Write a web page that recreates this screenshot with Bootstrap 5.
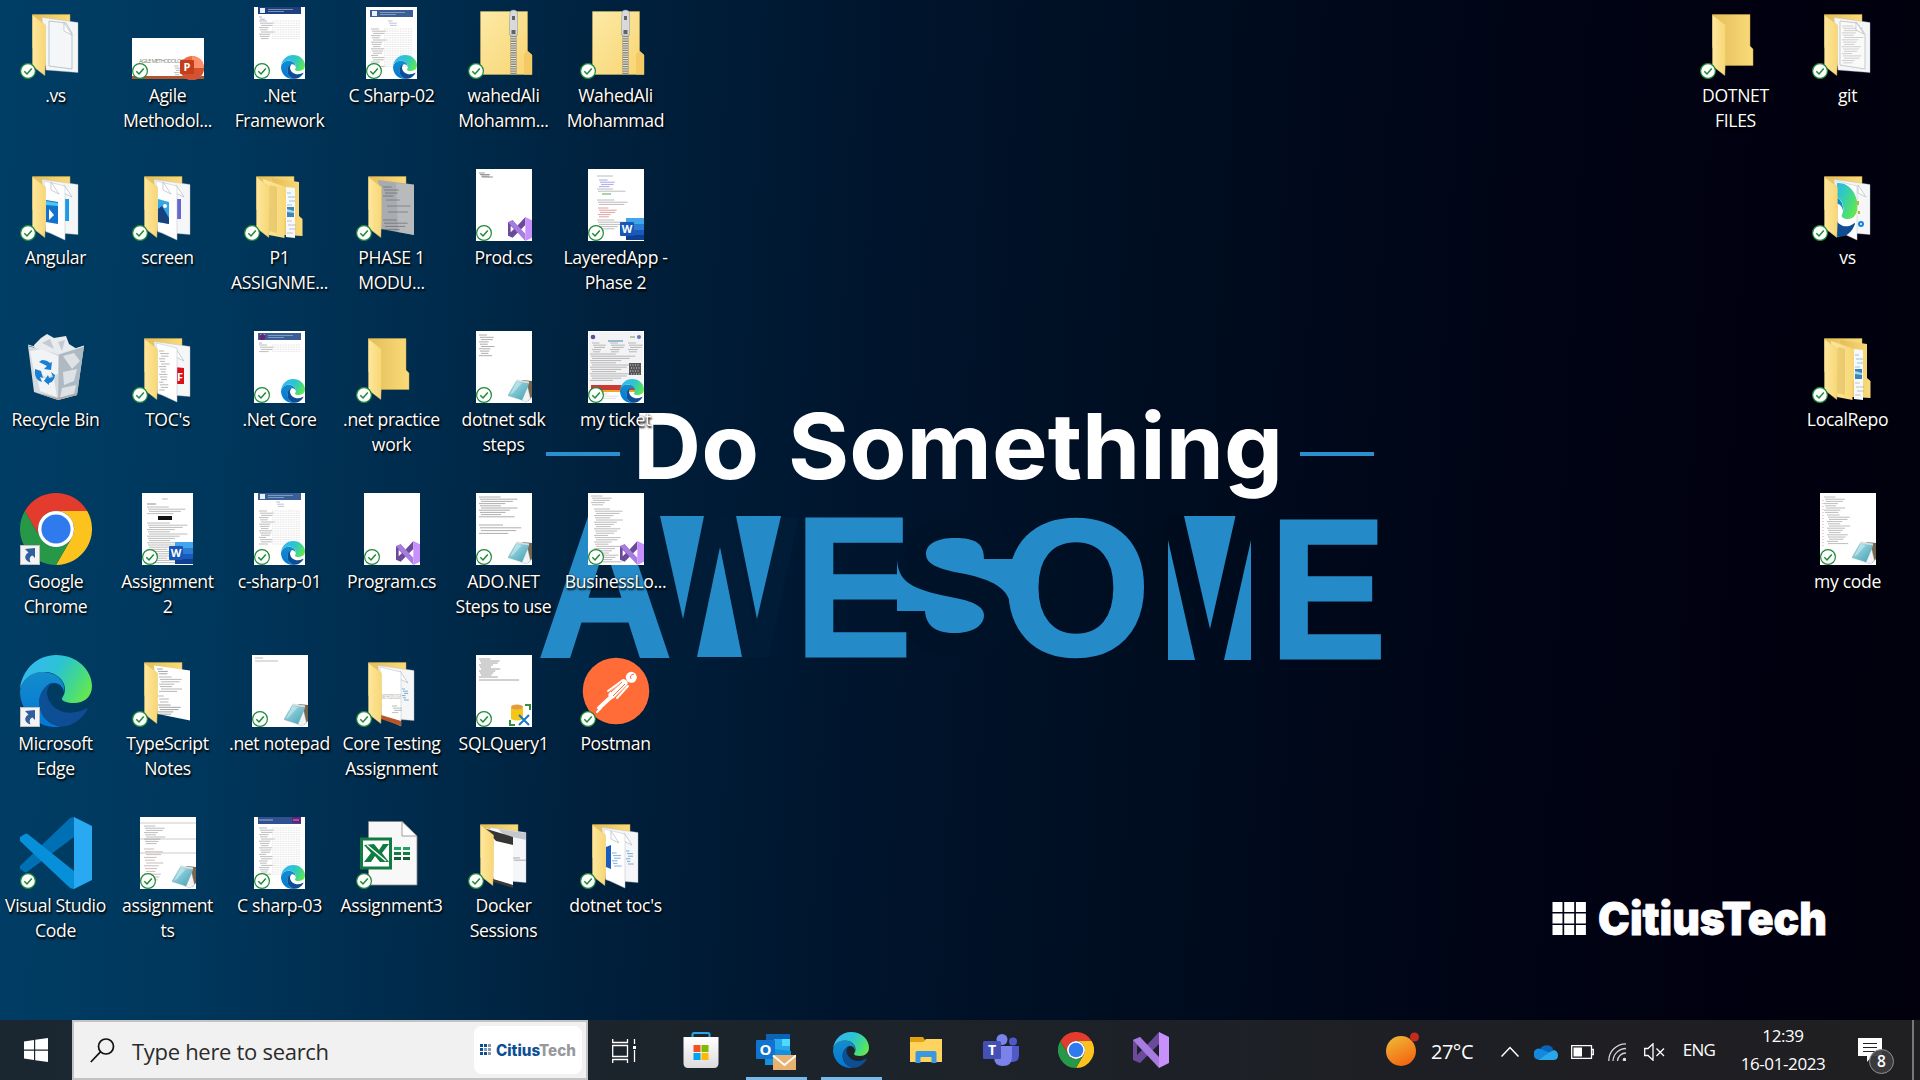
<!DOCTYPE html>
<html lang="en">
<head>
<meta charset="utf-8">
<meta name="viewport" content="width=device-width, initial-scale=1">
<title>Desktop</title>
<link href="https://cdn.jsdelivr.net/npm/bootstrap@5.3.0/dist/css/bootstrap.min.css" rel="stylesheet">
<style>
  body { width: 1920px; height: 1080px; overflow: hidden; font-family: "Open Sans", "Noto Sans", sans-serif; background: #000; }
  .desktop { height: 1020px; background: linear-gradient(93deg, #003e66 0%, #00375c 12%, #002c4d 22%, #001f3b 33%, #00152d 45%, #000e22 58%, #000718 72%, #010010 90%, #01000c 100%); }
  .wallpaper { left: 0; top: 0; width: 1920px; height: 1020px; }
  .icon-grid { display: grid; grid-template-rows: repeat(6, 162px); grid-auto-columns: 112px; grid-auto-flow: column; position: relative; }
  .shortcut { padding-top: 7px; width: 112px; color: #fff; }
  .shortcut > svg { width: 72px; height: 72px; overflow: visible; }
  .caption { font-size: 17.6px; line-height: 25px; letter-spacing: -.35px; white-space: pre; margin-top: 4px; margin-left: -1px; text-shadow: 1px 2px 2px #000, 0 0 2px rgba(0,0,0,.7); }
  .right-side { padding-right: 16px; }
  .taskbar { height: 60px; background: linear-gradient(90deg, #1a2731, #1c242b 40%, #1e1f24 75%, #201f22); color: #fff; }
  .start-btn { width: 72px; }
  .search-box { width: 516px; border: 2px solid #c3c3c3; background: #f1f1f1; color: #2b2b2b; padding: 4px 4px 4px 16px; }
  .search-box .hint { font-size: 22px; letter-spacing: -.3px; margin-left: 17px; padding-top: 3px; }
  .brand-chip { width: 108px; height: 48px; border-radius: 8px; background: #fff; }
  .task-view { width: 75px; padding-left: 24px; }
  .app-btn { width: 75px; height: 60px; position: relative; }
  .app-btn.running::after { content: ""; position: absolute; left: 8px; right: 6px; bottom: 0; height: 3px; background: #76b9ed; }
  .weather { width: 114px; font-size: 20px; letter-spacing: -.5px; padding-left: 6px; gap: 12px; }
  .lang { width: 55px; font-size: 17px; letter-spacing: -.7px; padding-right: 1px; }
  .clock { width: 112px; font-size: 17px; line-height: 28px; letter-spacing: -.4px; }
  .notify { width: 73px; padding-left: 18px; padding-top: 14px; }
  .peek { width: 8px; border-left: 2px solid #77787b; }
  .w32 { width: 32px; } .w36 { width: 36px; } .w38 { width: 38px; } .w40 { width: 40px; }
</style>
</head>
<body>
<svg width="0" height="0" class="position-absolute">
  <defs>
    <linearGradient id="edgeTop" x1="0" y1=".3" x2="1" y2=".7"><stop offset="0" stop-color="#35b8f5"/><stop offset=".45" stop-color="#2cc3d3"/><stop offset=".75" stop-color="#43d98a"/><stop offset="1" stop-color="#66e84c"/></linearGradient>
    <linearGradient id="edgeMid" x1="0" y1="0" x2="0" y2="1"><stop offset="0" stop-color="#158ccb"/><stop offset="1" stop-color="#0078d7"/></linearGradient>
    <linearGradient id="edgeLow" x1="0" y1="0" x2="1" y2="0"><stop offset="0" stop-color="#0b5095"/><stop offset="1" stop-color="#114a93"/></linearGradient>
    <linearGradient id="flap" x1="0" y1="0" x2="1" y2="0"><stop offset="0" stop-color="#fde79f"/><stop offset="1" stop-color="#f8d774"/></linearGradient>
    <linearGradient id="back" x1="0" y1="0" x2="1" y2="0"><stop offset="0" stop-color="#e3bd58"/><stop offset="1" stop-color="#fadb79"/></linearGradient>
    <linearGradient id="zip" x1="0" y1="0" x2="1" y2="1"><stop offset="0" stop-color="#fdeaa6"/><stop offset="1" stop-color="#f7d471"/></linearGradient>
    <linearGradient id="pad" x1="0" y1="0" x2="1" y2="1"><stop offset="0" stop-color="#b5e4ea"/><stop offset="1" stop-color="#3f9fb5"/></linearGradient>
    <linearGradient id="sun" x1="0" y1="0" x2=".5" y2="1"><stop offset="0" stop-color="#f0bd39"/><stop offset="1" stop-color="#f26a12"/></linearGradient>
    <linearGradient id="bag" x1="0" y1="0" x2="0" y2="1"><stop offset="0" stop-color="#fff"/><stop offset="1" stop-color="#dcdcdc"/></linearGradient>
    <symbol id="edge" viewBox="0 0 72 72">
      <path fill="url(#edgeMid)" d="M0 36C2 24 12 16 24 17C38 18 46 27 44 37C43 29 33 24 27 32C20 38 18 46 20 53C22 63 30 70 41 72C15 74 0 55 0 36Z"/>
      <path fill="url(#edgeLow)" d="M33 27C18 33 15 51 24 62C31 72 44 74 54 68C61 64 65 59 67 55C68 53 67 53 65 54C48 63 29 55 27 39C27 33 29 30 33 27Z"/>
      <path fill="url(#edgeTop)" d="M0 34C2 14 18 0 36 0C57 0 72 15 72 31C72 42 64 48 54 48C47 48 42 46 42 44C42 42 45 40 45 34C45 24 34 16 23 17C10 17 3 25 0 34Z"/>
    </symbol>
    <symbol id="chrome" viewBox="0 0 72 72">
      <path fill="#e33b2e" d="M4.8 18A36 36 0 0 1 67.2 18H36A18 18 0 0 0 20.4 45Z"/>
      <path fill="#fcc31e" d="M67.2 18A36 36 0 0 1 36 72L51.6 45A18 18 0 0 0 36 18Z"/>
      <path fill="#279847" d="M36 72A36 36 0 0 1 4.8 18L20.4 45A18 18 0 0 0 51.6 45Z"/>
      <circle cx="36" cy="36" r="18" fill="#fff"/><circle cx="36" cy="36" r="14.6" fill="#2f7bee"/>
    </symbol>
    <symbol id="vstudio" viewBox="0 0 36 36">
      <path fill="#6b4a9c" fill-rule="evenodd" d="M0 8L7 5L14 13L26 0V12L7 31L0 28ZM4 13V23L9 18Z"/>
      <path fill="#a77be0" d="M0 8L7 5L26 25V36Z"/><path fill="#c790fb" d="M26 0L36 5V31L26 36Z"/>
    </symbol>
    <symbol id="word" viewBox="0 0 24 24">
      <path fill="#41a5ee" d="M6 1h18v6H6z"/><path fill="#2b7cd3" d="M6 7h18v6H6z"/><path fill="#185abd" d="M6 13h18v5H6z"/><path fill="#103f91" d="M6 18h18v5H6z"/>
      <rect x="0" y="5" width="14" height="14" rx="1" fill="#1857b8"/><text x="7" y="16" font-size="11" font-weight="700" fill="#fff" text-anchor="middle">W</text>
    </symbol>
    <symbol id="notepad" viewBox="0 0 24 24">
      <path fill="#75664f" d="M14 1L24 2V18L20 22L17 6Z"/><path fill="#f1f3f4" stroke="#a9afb2" stroke-width=".4" d="M19 5L22.500 20L18 23L12.500 21Z"/><path fill="url(#pad)" stroke="#6fa9b6" stroke-width=".5" d="M8.500 2L21 4.500L14 21L0 16.500Z"/><path d="M8.500 1.500L21 3.500" stroke="#d5dfe2" stroke-width="1.800"/><path fill="#c9eef2" opacity=".6" d="M8.500 3L14 4L5 14L2 15.500Z"/>
    </symbol>
    <symbol id="ok" viewBox="0 0 16 16"><circle cx="8" cy="8" r="7.4" fill="#fff" stroke="#1c8a34" stroke-width="1.2"/><path d="M4.3 8.3L7 11L11.8 5.6" fill="none" stroke="#1c8a34" stroke-width="1.5"/></symbol>
    <symbol id="arrow" viewBox="0 0 20 20"><rect x=".5" y=".5" width="19" height="19" fill="#f4f4f4" stroke="#bfbfbf"/><path fill="#2f5f9e" d="M5 4L15 3V13L12.500 10.500C9 12 9.500 14 10.500 17.500C5 16 3 11 8.500 7.500Z"/></symbol>
  </defs>
</svg>

<main class="desktop position-relative d-flex justify-content-between">
  <svg class="wallpaper position-absolute" viewBox="0 0 1920 1020">
    <g font-family="Liberation Sans, sans-serif" font-weight="700">
      <text transform="translate(640 657) scale(.83 1)" font-size="203" fill="#001c37">W</text>
      <text transform="translate(893 654)" font-size="196" fill="#001228">S</text>
      <text transform="translate(1154 657) scale(.68 1)" font-size="203" fill="#000b1e">M</text>
    </g>
    <g font-family="Liberation Sans, sans-serif" font-weight="700" fill="#258bc8">
      <text transform="translate(537.500 655.500) scale(.93 1)" font-size="201" stroke="#258bc8" stroke-width="3">A</text>
      <text transform="translate(795 655.500) scale(.88 1)" font-size="199" stroke="#258bc8" stroke-width="3">E</text>
      <text transform="translate(1001.500 654.500) scale(.985 1)" font-size="195" stroke="#258bc8" stroke-width="2.500">O</text>
      <text transform="translate(1269.500 657.500) scale(.885 1)" font-size="198" stroke="#258bc8" stroke-width="3">E</text>
      <path d="M660 516H704L683 619Z"/><path d="M736 516H781L757 619Z"/><path d="M720 547L742 657H697Z"/>
      <path d="M926 554C926 544 937 538 955 538C975 538 984 543 984 559H1016L1010 602C1005 583 980 577 960 573C938 569 926 564 926 554Z"/>
      <path d="M897 560C899 585 915 590 960 599C978 603 984 609 984 615C984 626 972 633 955 633C936 633 926 626 925 611H897Z"/>
      <path d="M1184 516H1235.500L1210 629Z"/><path d="M1168 540L1195 660H1168Z"/><path d="M1251 540V660H1224Z"/>
    </g>
    <path fill="#2b90d0" d="M546 452h74v4h-74zM1300 452h74v4h-74z"/>
    <g fill="#fff" font-family="Inter, sans-serif" font-weight="700">
      <text x="633" y="479" font-size="91" textLength="126" lengthAdjust="spacingAndGlyphs">Do</text>
      <text x="788" y="479" font-size="91" textLength="495" lengthAdjust="spacingAndGlyphs">Something</text>
      <text x="1598" y="935" font-size="45" font-weight="900" stroke="#fff" stroke-width=".8" textLength="229" lengthAdjust="spacingAndGlyphs">CitiusTech</text>
    </g>
    <path fill="#fff" d="M1552.500 902h10v10h-10zm11.700 0h10v10h-10zm11.700 0h10v10h-10zM1552.500 913.500h10v10h-10zm11.700 0h10v10h-10zm11.700 0h10v10h-10zM1552.500 925h10v10h-10zm11.700 0h10v10h-10zm11.700 0h10v10h-10z"/>
  </svg>
  <div class="icon-grid" id="leftIcons"></div>
  <div class="icon-grid right-side" id="rightIcons"></div>
</main>

<footer class="taskbar d-flex align-items-center">
  <div class="start-btn d-flex justify-content-center"><svg width="24" height="24" viewBox="0 0 24 24" fill="#fff"><path d="M0 3.500L10 2V11.500H0ZM11.200 1.800L24 0V11.500H11.200ZM0 12.700H10V22L0 20.500ZM11.200 12.700H24V24L11.200 22.200Z"/></svg></div>
  <div class="search-box h-100 d-flex align-items-center">
    <svg width="25" height="25" viewBox="0 0 25 25" fill="none" stroke="#111" stroke-width="1.700"><circle cx="16" cy="8.500" r="7.500"/><path d="M10.700 13.700L.8 24"/></svg>
    <span class="hint">Type here to search</span>
    <div class="brand-chip ms-auto d-flex align-items-center justify-content-center">
      <svg width="98" height="20" viewBox="0 0 98 20"><path fill="#0d4f94" d="M1 4h3v3H1zm4 0h3v3H5zM1 8h3v3H1zm0 4h3v3H1zm4 0h3v3H5z"/><path fill="#8b99ab" d="M9 4h3v3H9zM5 8h3v3H5zm4 0h3v3H9zm0 4h3v3H9z"/><text x="17" y="16" font-family="Inter, sans-serif" font-weight="800" font-size="15.500" textLength="80" lengthAdjust="spacingAndGlyphs" fill="#0d4f94">Citius<tspan fill="#97999c">Tech</tspan></text></svg>
    </div>
  </div>
  <div class="task-view"><svg width="25" height="24" viewBox="0 0 25 24" fill="none" stroke="#fff" stroke-width="1.300"><path d="M.7 0V3.500H15.500V0M.7 24V20.500H15.500V24M.7 6.500H15.500V17.500H.7ZM22.500 0V5M22.500 11V23"/><path fill="#fff" stroke="none" d="M21 7h3v3h-3z"/></svg></div>
  <div class="app-btn d-flex align-items-center justify-content-center"><svg width="36" height="36" viewBox="0 0 36 36"><path fill="none" stroke="#29a5e8" stroke-width="2" d="M9.500 6V2.500Q9.500 1 11 1H25Q26.500 1 26.500 2.500V6"/><path fill="url(#bag)" d="M.5 5H35.500V31Q35.500 36 31 36H5Q.5 36 .5 31Z"/><path fill="#f25022" d="M10.500 13h7v7h-7z"/><path fill="#7fba00" d="M18.500 13h7v7h-7z"/><path fill="#00a4ef" d="M10.500 21h7v7h-7z"/><path fill="#ffb900" d="M18.500 21h7v7h-7z"/></svg></div>
  <div class="app-btn running d-flex align-items-center justify-content-center"><svg width="40" height="40" viewBox="0 0 40 40"><path fill="#0a63b4" d="M10 4h24v13H10z"/><path fill="#28a8ea" d="M18 9h16v14H18z"/><path fill="#50d9ff" d="M26 9h8v7h-8z"/><path fill="#1490df" d="M9 18l26 3v14H9z"/><rect x="0" y="10" width="19" height="19" rx="1" fill="#1073cf"/><text x="9.500" y="25" font-size="15" font-weight="700" fill="#fff" text-anchor="middle">O</text><path fill="#e8b170" d="M17 25h23v16H17z"/><path fill="none" stroke="#fff" stroke-width="1.800" d="M17 25.500L28.500 35L40 25.500"/></svg></div>
  <div class="app-btn running d-flex align-items-center justify-content-center"><svg width="36" height="36"><use href="#edge"/></svg></div>
  <div class="app-btn d-flex align-items-center justify-content-center"><svg width="32" height="28" viewBox="0 0 32 28"><path fill="#e2a10e" d="M0 1H13L15 4L13 7H0Z"/><path fill="#fed45e" d="M0 6H13L16 3H32V26H0Z"/><path fill="#3a98e0" d="M5.500 27V17Q5.500 15 7.500 15H24.500Q26.500 15 26.500 17V27H21.500V21H10.500V27Z"/></svg></div>
  <div class="app-btn d-flex align-items-center justify-content-center"><svg width="36" height="34" viewBox="0 0 36 34"><circle cx="19" cy="6.500" r="5.500" fill="#7b83eb"/><circle cx="30" cy="8.500" r="4" fill="#5059c9"/><path fill="#5059c9" d="M26 13H36V22Q36 29 29 29H26Z"/><path fill="#7b83eb" d="M11 13H29V24Q29 33 20 33Q11 33 11 24Z"/><rect y="8" width="18" height="18" rx="1.500" fill="#4450b3"/><text x="9" y="22" font-size="14" font-weight="700" fill="#fff" text-anchor="middle">T</text></svg></div>
  <div class="app-btn d-flex align-items-center justify-content-center"><svg width="36" height="36"><use href="#chrome"/></svg></div>
  <div class="app-btn d-flex align-items-center justify-content-center"><svg width="36" height="36"><use href="#vstudio"/></svg></div>

  <div class="weather ms-auto d-flex align-items-center"><svg width="33" height="36" viewBox="0 0 33 36"><circle cx="15" cy="19" r="15" fill="url(#sun)"/><circle cx="28.500" cy="5" r="4.500" fill="#c42b1c"/></svg><span class="pt-1">27°C</span></div>
  <div class="w32 text-center"><svg width="18" height="11" fill="none" stroke="#fff" stroke-width="1.500"><path d="M.5 10.500L9 1.500L17.500 10.500"/></svg></div>
  <div class="w40 text-center"><svg width="24" height="16" viewBox="0 0 24 16"><path fill="#0b64b8" d="M6 6A7 6.500 0 0 1 19 5L18 10L7 9Z"/><path fill="#1289dc" d="M0 11A5 5 0 0 1 7 5L16 9L4 15.500Q0 15 0 11Z"/><path fill="#28a8ea" d="M4 15.800L16 8L20 6Q24 7 24 11.500Q24 16 19 16H5Z"/></svg></div>
  <div class="w32 text-center"><svg width="23" height="14" viewBox="0 0 23 14"><path fill="none" stroke="#fff" stroke-width="1.300" d="M.7.7H20.500V13.300H.7ZM20.500 4.500H22.300V9.500H20.500"/><path fill="#fff" d="M2.500 2.500H11V11.500H2.500Z"/></svg></div>
  <div class="w38 text-center"><svg width="18" height="18" viewBox="0 0 18 18" fill="none" stroke="#d6d6d8" stroke-width="1.300"><path d="M.8 18A17 17 0 0 1 18 .8M5 18A13 13 0 0 1 18 5.500M9.500 18A8.500 8.500 0 0 1 18 10"/><circle cx="16.500" cy="16.500" r="1.200" fill="#fff"/></svg></div>
  <div class="w36 text-center"><svg width="21" height="18" viewBox="0 0 21 18" fill="none" stroke="#fff" stroke-width="1.300"><path d="M.7 5.500H4L9 .8V17.200L4 12.500H.7ZM12.500 5.500L20 13M20 5.500L12.500 13"/></svg></div>
  <div class="lang text-center">ENG</div>
  <div class="clock text-center"><div>12:39</div><div>16-01-2023</div></div>
  <div class="notify"><svg width="38" height="38" viewBox="0 0 38 38"><path fill="#fff" d="M1 0H25V18H15L10 24V18H1Z"/><path stroke="#222" stroke-width="1.200" d="M6 5.500H20M6 9.500H20M6 13.500H20"/><circle cx="24.500" cy="23.500" r="12" fill="#3c3c40" fill-opacity=".93" stroke="#909093"/><text x="24.500" y="29" font-size="15.500" font-weight="600" fill="#fff" text-anchor="middle">8</text></svg></div>
  <div class="peek h-100"></div>
</footer>

<script src="https://cdn.jsdelivr.net/npm/bootstrap@5.3.0/dist/js/bootstrap.bundle.min.js"></script>
<script>
  const use = (id, x, y, s) => `<use href="#${id}" x="${x}" y="${y}" width="${s}" height="${s}"/>`;
  const check = x => use('ok', x, 56, 16);

  // Rows of miniature print: varying lengths derived from the row number.
  function print(x, y, w, rows, color = '#8f8f8f', gap = 2.2) {
    let d = '';
    for (let i = 0; i < rows; i++) d += `M${x + (i % 3)} ${(y + i * gap).toFixed(1)}h${(w * (0.45 + ((i * 37 + 11) % 50) / 90)).toFixed(1)}`;
    return `<path d="${d}" stroke="${color}" stroke-width=".8" opacity=".75"/>`;
  }
  function thumb(w, inner, app) {
    const x = (72 - w) / 2 | 0;
    const badge = app === 'sql'
      ? `<path fill="#f5c518" d="M43 53V64Q49 67 55 64V53Z"/><ellipse cx="49" cy="52" rx="6" ry="2.500" fill="#e59a3c"/><path fill="none" stroke="#388e3c" stroke-width="2" d="M57 50H62V55M42 65V70H47"/><path stroke="#1878c8" stroke-width="2" d="M51 60L61 70M61 60L51 70"/>`
      : use(app, x + w - 24, 48, 24);
    return `<rect x="${x}" width="${w}" height="72" fill="#fff"/>${inner}${badge}${check(x)}`;
  }
  const header = (y, c = '#3a5f96') => `<path fill="${c}" d="M14 ${y}H57V${y + 7}H14Z"/><path fill="#e8f0f5" d="M16 ${y + 1}h5v5h-5z"/><path stroke="#9db4d2" stroke-width=".7" d="M24 ${y + 2.5}h25M24 ${y + 4.5}h16"/>`;
  const toc = (y, n) => print(15, y, 14, n) + `<path stroke="#dcdcdc" stroke-width=".8" stroke-dasharray="1 .6" d="${Array.from({ length: n }, (_, i) => `M28 ${y + i * 2.2}H56`).join('')}"/>`;

  const backPanel = '<path fill="url(#back)" stroke="#c9a64c" stroke-width=".5" d="M12.500 7.500H50V30L24 60L12.500 40Z"/>';
  const flap = '<path fill="url(#flap)" stroke="#e3c36b" stroke-width=".4" d="M12.500 8L25.500 18V50L24.800 68.500L12.500 59Z"/>';
  const rearPage = '<path fill="#f5f6f7" stroke="#b9bec4" stroke-width=".4" d="M22 10.500L58 15.500V65.500L26 63Z"/>';
  const frontPage = '<path fill="#fff" stroke="#b9bec4" stroke-width=".5" d="M24 12L45 17V71L25.500 62Z"/>';
  const fold = (x, y) => `<path fill="#fff" stroke="#a8b0b8" stroke-width=".6" d="M${x - 8} ${y}V${y + 8}L${x} ${y + 12}Z"/>`;
  const folder = inner => backPanel + inner + flap + check(0);
  const nested = backPanel + '<path fill="url(#back)" d="M28 9L55 13V47L58.500 50V67L40 66Z"/><path fill="#f7f8fa" d="M42 18L51 19V69L42 68Z"/>' + print(43, 24, 7, 4, '#4aa3e0', 4) + '<path fill="#3b86b8" d="M43 38h7v10h-7z"/><path fill="#a8d6ee" d="M43 40l7 2v2l-7-1z"/>' + print(43, 52, 8, 4, '#9aa0a5', 4) + '<path fill="url(#flap)" d="M19 10L42 18V48L40.500 50V69L25 66Z"/><path fill="#dcb756" opacity=".5" d="M26 16L33 18V64L25 62Z"/>' + flap + check(0);

  const art = {
    page: folder(rearPage + '<path fill="none" stroke="#8fa6b5" stroke-width=".6" d="M29 14L46 16L52 26V62L29 59Z"/>' + fold(52, 16)),
    media: folder(rearPage + fold(52, 16) + '<path fill="#1d9ae6" d="M45 30h4v22h-4z"/>' + frontPage + fold(39, 13) + '<path fill="#1272cc" d="M26 31L38 33V55L26 53Z"/><path fill="#49c8f3" d="M26 32L38 34V37L26 36Z"/><path fill="#fff" d="M29 40L34 46L29 51Z"/>'),
    photos: folder(rearPage + fold(52, 16) + '<path fill="#6866d1" d="M45 30h4v20h-4z"/>' + frontPage + fold(39, 13) + '<path fill="#32a6e8" d="M26 30L37 33V55L26 53Z"/><path fill="#18427f" d="M26 40L30 37L37 49V55L26 53Z"/><circle cx="33" cy="37" r="2" fill="#fff"/>'),
    nested,
    photo: folder('<path fill="#a9abae" d="M22 11L58 15.500V66L25 60Z"/><path fill="#c3c4c5" opacity=".6" d="M40 14L58 16V66L42 63Z"/>' + print(27, 18, 15, 4, '#555c6d', 3) + print(30, 31, 24, 3, '#5d6477', 6) + print(27, 51, 24, 4, '#555c6d', 3.2)),
    empty: '<path fill="url(#back)" stroke="#c9a64c" stroke-width=".5" d="M12.500 7.500H50V39L53 42V58.500H24L12.500 40Z"/>' + flap + check(0),
    toc: folder(rearPage + fold(52, 18) + '<path fill="#d9101c" d="M42 36L52 37V53L42 53Z"/><text x="45" y="50" font-size="11" font-weight="700" fill="#fff">F</text>' + frontPage + print(27, 20, 9, 16, '#888', 2.6)),
    ts: folder('<path fill="#fff" d="M22 10.500L58 15.500V65.500L26 59Z"/>' + print(25, 14, 10, 3, '#666', 2.4) + print(27, 22, 22, 7, '#888', 2.4) + print(26, 41, 10, 3, '#888', 3) + print(26, 50, 22, 5, '#666', 2.3)),
    core: folder(rearPage + fold(52, 16) + print(46, 34, 5, 6, '#2f72c4') + frontPage + '<text x="26" y="44" font-size="6.500" textLength="19" lengthAdjust="spacingAndGlyphs" fill="#9a9a90">METHODOLOGY</text>' + print(36, 51, 9, 4) + '<path fill="#b5552b" d="M25 60L45 66V71L25 64Z"/>'),
    docker: folder(rearPage + '<path fill="#c4c8cc" d="M30 12L58 16V23L36 18Z"/>' + print(45, 41, 12, 2, '#777') + '<path fill="#fff" d="M18 11L45 22V70L25.500 62Z"/><path fill="#353535" d="M17 11.500L45 20V28L28 24Z"/><path fill="#3c3836" d="M25 62L45 68V71L25 65Z"/>'),
    words: folder(rearPage + fold(52, 16) + print(46, 34, 6, 6, '#2f72c4', 2.6) + frontPage + fold(39, 14) + '<path fill="#1a5cbe" d="M26 30L31 28V52L26 50Z"/>' + print(32, 36, 8, 6, '#2f78cf', 2.6)),
    git: folder(rearPage + '<path fill="#fafafa" stroke="#999" stroke-width=".5" d="M28 14L45 16L53 27V62L28 58Z"/>' + print(30, 19, 20, 17, '#b3b3b3', 2.3) + fold(52, 15)),
    edgeFolder: folder(rearPage + fold(54, 16) + '<circle cx="49" cy="55" r="2" fill="none" stroke="#1684d8" stroke-width="2"/><path stroke="#c7ac2d" stroke-width="2" d="M46 32v4M47 42v3"/>' + frontPage + '<svg x="25" y="14" width="20.500" height="54" viewBox="33 0 39 72" preserveAspectRatio="none"><use href="#edge" width="72" height="72"/></svg>'),
    zip: '<path fill="url(#zip)" stroke="#d3b159" stroke-width=".5" d="M12.500 4.500H59.500V44L64 48V67.500H12.500Z"/><path fill="#f3ca63" d="M56 47L59.500 44L64 48V67.500H56Z"/><path fill="#8d8978" d="M42.500 27h6v40h-6z"/><path stroke="#e3e3df" stroke-width="5" stroke-dasharray="1 1.300" d="M45.500 28V67"/><path fill="#d7d9da" stroke="#8d8f92" stroke-width=".5" d="M42 6Q42 3 45.500 3Q49 3 49.500 6V28H41.500V13Z"/><path fill="#606468" d="M44 9h3v4h-3zM43.500 23h4v4h-4z"/>' + check(0),
    agile: '<rect y="31" width="72" height="41" fill="#fff"/><path fill="#b5562b" d="M0 69h72v3H0z"/><text x="7" y="56" font-size="5.500" textLength="48" fill="#85857c">AGILE METHODOLOGY</text>' + print(42, 59, 8, 5) + '<circle cx="60" cy="61" r="12" fill="#ed6c47"/><path fill="#ff8f6b" d="M60 49A12 12 0 0 1 72 61H60Z"/><path fill="#d35230" d="M48 61H72A12 12 0 0 1 48 61Z"/><rect x="48" y="53" width="14" height="14" rx="1" fill="#c43e1c"/><text x="55" y="64" font-size="11" font-weight="700" text-anchor="middle" fill="#fff">P</text>' + check(0),
    netfw: thumb(51, header(0, '#1f3f7d') + print(15, 10, 5, 2, '#6b86b5') + toc(14, 9), 'edge'),
    cs02: thumb(51, header(3) + print(32, 14, 8, 3, '#8aa0c0') + toc(22, 18), 'edge'),
    core1: thumb(51, header(2) + '<circle cx="18.500" cy="6" r="3" fill="#68217a"/>' + print(15, 12, 5, 1, '#6b86b5') + toc(14, 4), 'edge'),
    cs01: thumb(51, header(0) + print(32, 9, 7, 3, '#8aa0c0') + toc(18, 16), 'edge'),
    cs03: thumb(51, '<path fill="#2f528f" d="M14 0H57V7H14Z"/><path fill="#68217a" d="M48 0h9v6h-9z"/><path stroke="#dce" stroke-width=".7" d="M15 3h14M49 3h6"/>' + toc(11, 22), 'edge'),
    prod: thumb(56, print(11, 4, 10, 3, '#555', 1.5) + print(14, 8, 19, 1, '#444'), 'vstudio'),
    layered: thumb(56, print(17, 7, 28, 1) + print(19, 11, 15, 4, '#6a70d8') + print(17, 20, 28, 2) + '<path stroke="#58a45b" d="M22 25h9"/>' + print(17, 31, 30, 3) + print(18, 39, 18, 5, '#cb6262') + print(17, 51, 30, 5), 'word'),
    assign2: thumb(51, print(30, 6, 10, 1) + print(15, 11, 16, 1, '#444') + print(15, 14, 38, 4) + '<path fill="#111" d="M26 23h14v4H26z"/>' + print(15, 30, 40, 19), 'word'),
    sdk: thumb(56, print(11, 4, 14, 10, '#777', 2.3), 'notepad'),
    ado: thumb(56, print(11, 4, 38, 10, '#777', 2.2) + print(11, 32, 42, 4, '#777', 2.8), 'notepad'),
    business: thumb(56, print(11, 3, 20, 5) + print(14, 16, 28, 25), 'vstudio'),
    program: thumb(56, '', 'vstudio'),
    netnote: thumb(56, print(11, 3, 14, 1) + print(11, 6, 40, 1), 'notepad'),
    assignts: thumb(56, '<path stroke="#aaa" stroke-width=".6" d="M8 6h56M8 22h56M8 36h56"/>' + print(12, 9, 20, 9) + print(12, 32, 18, 12, '#a99090', 2.8), 'notepad'),
    mycode: thumb(56, print(12, 4, 20, 8) + print(15, 22, 22, 14) + '<path stroke="#c88" stroke-width=".8" stroke-dasharray="1 2" d="M11 7V55"/>', 'notepad'),
    sql: thumb(56, print(11, 4, 20, 10, '#666', 2) + print(11, 25, 70, 1, '#666'), 'sql'),
    ticket: thumb(56, '<path fill="#f3f3f5" d="M9 1h54v60H9z"/><circle cx="13" cy="6" r="2.300" fill="#53529b"/><path stroke="#58a45b" d="M50 6h5"/><circle cx="59" cy="6" r="2" fill="#6a70b8"/><path stroke="#3f83ae" d="M28 10h15"/>' + print(12, 12, 13, 5) + print(30, 12, 14, 5) + print(48, 12, 14, 5) + print(10, 23, 45, 13) + '<path fill="#555" d="M49 32h12v12H49z"/><path stroke="#ddd" stroke-dasharray="1 1.500" d="M50 34h10M51 37h9M50 40h10M51 43h9"/><path fill="#c93a36" d="M11 54h51v5H11z"/><path fill="#f0a62a" d="M11 59h51v2H11z"/>' + print(13, 63, 25, 3, '#ccc'), 'edge'),
    chrome: use('chrome', 0, 0, 72) + use('arrow', 0, 52, 20),
    edge: use('edge', 0, 0, 72) + use('arrow', 0, 52, 20),
    vscode: '<path fill="#0070b5" d="M0 49L50 1L54 0V20L7 55Q5 56 3 54L0 52Z"/><path fill="#0790d9" d="M0 23V20L5 17Q7 16 9 18L54 54V72Q51 72 49 70L0 24Z"/><path fill="#29a9f2" d="M54 0L72 9V63L54 72Z"/>' + check(0),
    postman: '<circle cx="36" cy="36" r="33.300" fill="#ff6c37"/><g fill="none" stroke="#fff" stroke-linecap="round"><path stroke-width="7" d="M44 28L32 40"/><path stroke-width="4" d="M31 42L19 53"/><path stroke-width="2" d="M43 25L28 36M48 31L37 43M17 57L21 53"/></g><circle cx="51.300" cy="22.300" r="5.500" fill="#fff"/><path fill="none" stroke="#ff6c37" d="M54 19Q49 20 51 24M45 29L33 41M42 27L31 37"/>' + check(0),
    excel: '<path fill="#f8f8f8" stroke="#8b8480" stroke-width=".8" d="M12.500 4.500H46L61 19V68H12.500Z"/><path fill="#fff" stroke="#8b8480" stroke-width=".8" d="M46 4.500V19H61Z"/><rect x="5.500" y="22" width="29" height="29" fill="#fff" stroke="#107c41" stroke-width="3"/><path fill="#107c41" d="M8 28L18 27L23 33L27 27H33L26 36L33 45H24L19 39L15 45H8L15 36Z"/><path stroke="#fff" stroke-width="1.500" d="M11 28L30 44"/><path fill="#21a366" d="M38 30h7v3h-7zm9 0h7v3h-7z"/><path fill="#107c41" d="M38 35h7v3h-7zm9 0h7v3h-7z"/><path fill="#185c37" d="M38 40h7v3h-7zm9 0h7v3h-7z"/>' + check(0),
    bin: '<g transform="translate(0 -2)"><path fill="#e9ecee" d="M14 16L21 9L27 5L34 9L46 7L49 15L57 20L50 26L15 24Z"/><path fill="#c3cbd1" d="M22 14L30 10L34 20ZM38 13L45 11L42 22Z"/><path fill="#d3dae0" d="M8 17L39 25L64 17L57 66L38 71L14 63Z"/><path fill="#f1f3f5" d="M10 22L22 20L38 27V45L26 48L14 42ZM17 48L34 50L37 68L20 62Z"/><path fill="#aeb9c2" d="M39 25L64 17L57 66L38 71Z"/><path fill="#dde2e6" d="M43 27L54 24L60 32L52 40ZM43 43L57 40L54 52L44 56ZM42 59L56 56L54 65L40 69Z"/><path fill="none" stroke="#e4ebf0" stroke-width="1" d="M8 16L39 25L64 17"/><g fill="#1780d4"><path d="M19 33L22 31Q27 31 30 34L32 33L31 41L24 40L27 37Z"/><path d="M15 40L21 42L23 49L20 48L22 53Q15 51 15 44Z"/><path d="M31 43L35 46Q34 53 29 54V56L24 52L28 46L29 49L33 48Z"/></g><path fill="#b2aaa4" d="M14 63L38 69L57 64V66L38 71Z"/></g>'
  };

  const left = [
    ['.vs', 'page'], ['Angular', 'media'], ['Recycle Bin', 'bin'], ['Google\nChrome', 'chrome'], ['Microsoft\nEdge', 'edge'], ['Visual Studio\nCode', 'vscode'],
    ['Agile\nMethodol...', 'agile'], ['screen', 'photos'], ["TOC's", 'toc'], ['Assignment\n2', 'assign2'], ['TypeScript\nNotes', 'ts'], ['assignment\nts', 'assignts'],
    ['.Net\nFramework', 'netfw'], ['P1\nASSIGNME...', 'nested'], ['.Net Core', 'core1'], ['c-sharp-01', 'cs01'], ['.net notepad', 'netnote'], ['C sharp-03', 'cs03'],
    ['C Sharp-02', 'cs02'], ['PHASE 1\nMODU...', 'photo'], ['.net practice\nwork', 'empty'], ['Program.cs', 'program'], ['Core Testing\nAssignment', 'core'], ['Assignment3', 'excel'],
    ['wahedAli\nMohamm...', 'zip'], ['Prod.cs', 'prod'], ['dotnet sdk\nsteps', 'sdk'], ['ADO.NET\nSteps to use', 'ado'], ['SQLQuery1', 'sql'], ['Docker\nSessions', 'docker'],
    ['WahedAli\nMohammad', 'zip'], ['LayeredApp -\nPhase 2', 'layered'], ['my ticket', 'ticket'], ['BusinessLo...', 'business'], ['Postman', 'postman'], ["dotnet toc's", 'words']
  ];
  const right = [['DOTNET\nFILES', 'empty'], null, null, null, null, null, ['git', 'git'], ['vs', 'edgeFolder'], ['LocalRepo', 'nested'], ['my code', 'mycode']];
  const tile = t => t ? `<div class="shortcut d-flex flex-column align-items-center text-center"><svg viewBox="0 0 72 72">${art[t[1]]}</svg><div class="caption">${t[0]}</div></div>` : '<div></div>';
  document.getElementById('leftIcons').innerHTML = left.map(tile).join('');
  document.getElementById('rightIcons').innerHTML = right.map(tile).join('');
</script>
</body>
</html>
